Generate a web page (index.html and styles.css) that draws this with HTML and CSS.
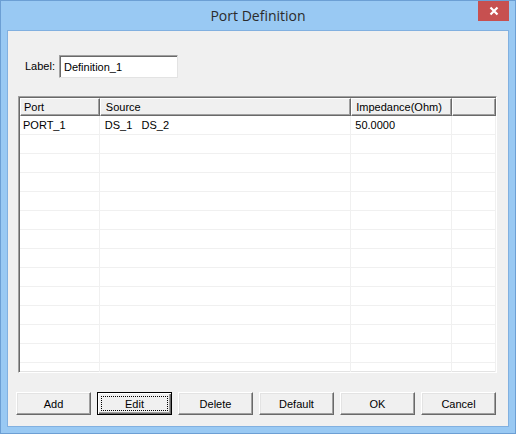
FILE: index.html
```html
<!DOCTYPE html>
<html>
<head>
<meta charset="utf-8">
<link rel="stylesheet" href="styles.css">
</head>
<body>
<div class="window">
  <div class="titlebar">
    <span class="spacer"></span>
    <span class="title">Port Definition</span>
    <span class="controls"><span class="close"><svg width="10" height="10" viewBox="0 0 10 10"><path d="M1.5 1.5 L8.5 8.5 M8.5 1.5 L1.5 8.5" stroke="#fff" stroke-width="2.2" fill="none"/></svg></span></span>
  </div>
  <div class="client">
    <div class="label-row">
      <span class="label">Label:</span>
      <span class="textbox">Definition_1</span>
    </div>
    <div class="list">
      <div class="row header">
        <div class="cell c1">Port</div>
        <div class="cell c2">Source</div>
        <div class="cell c3">Impedance(Ohm)</div>
        <div class="cell c4"></div>
      </div>
      <div class="body">
        <div class="row"><div class="cell c1">PORT_1</div><div class="cell c2">DS_1&nbsp;&nbsp;&nbsp;DS_2</div><div class="cell c3">50.0000</div><div class="cell c4"></div></div>
        <div class="row"><div class="cell c1"></div><div class="cell c2"></div><div class="cell c3"></div><div class="cell c4"></div></div>
        <div class="row"><div class="cell c1"></div><div class="cell c2"></div><div class="cell c3"></div><div class="cell c4"></div></div>
        <div class="row"><div class="cell c1"></div><div class="cell c2"></div><div class="cell c3"></div><div class="cell c4"></div></div>
        <div class="row"><div class="cell c1"></div><div class="cell c2"></div><div class="cell c3"></div><div class="cell c4"></div></div>
        <div class="row"><div class="cell c1"></div><div class="cell c2"></div><div class="cell c3"></div><div class="cell c4"></div></div>
        <div class="row"><div class="cell c1"></div><div class="cell c2"></div><div class="cell c3"></div><div class="cell c4"></div></div>
        <div class="row"><div class="cell c1"></div><div class="cell c2"></div><div class="cell c3"></div><div class="cell c4"></div></div>
        <div class="row"><div class="cell c1"></div><div class="cell c2"></div><div class="cell c3"></div><div class="cell c4"></div></div>
        <div class="row"><div class="cell c1"></div><div class="cell c2"></div><div class="cell c3"></div><div class="cell c4"></div></div>
        <div class="row"><div class="cell c1"></div><div class="cell c2"></div><div class="cell c3"></div><div class="cell c4"></div></div>
        <div class="row"><div class="cell c1"></div><div class="cell c2"></div><div class="cell c3"></div><div class="cell c4"></div></div>
        <div class="row"><div class="cell c1"></div><div class="cell c2"></div><div class="cell c3"></div><div class="cell c4"></div></div>
        <div class="row"><div class="cell c1"></div><div class="cell c2"></div><div class="cell c3"></div><div class="cell c4"></div></div>
      </div>
    </div>
    <div class="buttons">
      <span class="btn">Add</span>
      <span class="btn default"><span class="focus">Edit</span></span>
      <span class="btn">Delete</span>
      <span class="btn">Default</span>
      <span class="btn">OK</span>
      <span class="btn">Cancel</span>
    </div>
  </div>
</div>
</body>
</html>
```
FILE: styles.css
```css
* { box-sizing: border-box; }
html, body { margin: 0; padding: 0; }
body { width: 516px; height: 434px; overflow: hidden; font-family: "Liberation Sans", Arial, sans-serif; }
.window {
  width: 516px; height: 434px;
  background: #99c9f3;
  border: 1px solid #6c9fd4;
  display: flex; flex-direction: column;
}
.titlebar {
  height: 29px;
  display: grid;
  grid-template-columns: 1fr auto 1fr;
  align-items: start;
}
.title {
  font-family: "Open Sans", "Noto Sans", sans-serif;
  font-size: 14px;
  color: #2b2b2b;
  padding-top: 5px;
  line-height: 20px;
}
.controls { display: flex; justify-content: flex-end; padding-right: 6px; }
.close {
  width: 31px; height: 20px;
  background: #c75050;
  display: flex; align-items: center; justify-content: center;
}
.client {
  flex: 1;
  margin: 0 6px 6px 6px;
  border: 1px solid #81b0e0;
  background: #f0f0f0;
  font-family: "Liberation Sans", Arial, sans-serif;
  font-size: 11px;
  color: #000;
  padding: 24px 10px 0 10px;
  display: flex; flex-direction: column;
}
.label-row { display: flex; align-items: center; height: 22px; padding-left: 7px; }
.label { width: 34px; }
.textbox {
  width: 119px; height: 23px;
  background: #fff;
  border: 1px solid;
  border-color: #a0a0a0 #e3e3e3 #e3e3e3 #a0a0a0;
  box-shadow: inset 1px 1px 0 #696969;
  padding: 4px 0 0 4px;
  line-height: 14px;
}
.list {
  margin-top: 19px;
  width: 479px; height: 277px;
  background: #fff;
  border: 1px solid;
  border-color: #a0a0a0 #ffffff #ffffff #a0a0a0;
  box-shadow: inset 1px 1px 0 #696969, inset -1px -1px 0 #e3e3e3;
  padding: 1px 0 0 1px;
  overflow: hidden;
  display: flex; flex-direction: column;
}
.row { display: flex; height: 19px; }
.cell { height: 19px; line-height: 18px; padding-left: 3px; white-space: nowrap; border-right: 1px solid #f0f0f0; border-bottom: 1px solid #f0f0f0; }
.c1 { width: 80px; }
.c2 { width: 252px; padding-left: 5px; }
.c3 { width: 101px; padding-left: 4px; }
.c4 { width: 44px; }
.header .cell {
  background: #f0f0f0;
  height: 18px; line-height: 16px;
  border-top: 1px solid #fff;
  border-left: 1px solid #fff;
  border-right: 1px solid #696969;
  border-bottom: 1px solid #696969;
  box-shadow: inset -1px -1px 0 #a0a0a0;
}
.header { height: 18px; }
.body { flex: 1; }
.buttons {
  margin-top: 19px;
  display: flex; gap: 6px;
  margin-left: -2px;
}
.btn {
  width: 75px; height: 23px;
  display: flex; align-items: center; justify-content: center;
  background: #f0f0f0;
  border: 1px solid;
  border-color: #fff #696969 #696969 #fff;
  box-shadow: inset -1px -1px 0 #a0a0a0, inset 1px 1px 0 #e3e3e3;
}
.btn.default {
  border: 1px solid #000;
  box-shadow: inset 1px 1px 0 #fff, inset -1px -1px 0 #696969, inset -2px -2px 0 #a0a0a0;
}
.focus {
  width: 67px; height: 15px;
  border: 1px dotted #000;
  display: flex; align-items: center; justify-content: center;
}
```
